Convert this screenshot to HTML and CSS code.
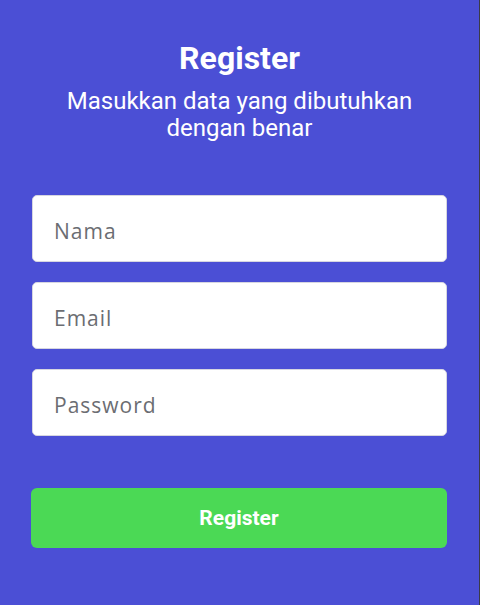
FILE: index.html
```html
<!DOCTYPE html>
<html>
<head>
<meta charset="utf-8">
<link rel="stylesheet" href="styles.css">
</head>
<body>
<div class="screen">
  <header class="head">
    <h1 class="title">Register</h1>
    <p class="subtitle">Masukkan data yang dibutuhkan<br>dengan benar</p>
  </header>
  <form class="form">
    <div class="field"><span class="placeholder">Nama</span></div>
    <div class="field"><span class="placeholder">Email</span></div>
    <div class="field"><span class="placeholder">Password</span></div>
    <div class="btn">Register</div>
  </form>
</div>
</body>
</html>
```
FILE: styles.css
```css
html, body {
  margin: 0;
  padding: 0;
  height: 100%;
}
body {
  background: #3b3b48;
  font-family: Roboto, "Liberation Sans", sans-serif;
}
.screen {
  width: 479px;
  height: 605px;
  background: #4b4fd5;
  box-sizing: border-box;
  padding: 38px 32px 0 32px;
}
.head {
  text-align: center;
  color: #fff;
}
.title {
  margin: 0;
  font-size: 32px;
  font-weight: 700;
  line-height: 40px;
}
.subtitle {
  margin: 10px 0 0 0;
  font-size: 24px;
  line-height: 27px;
  font-weight: 400;
}
.form {
  margin-top: 53px;
  display: flex;
  flex-direction: column;
  gap: 20px;
}
.field {
  height: 67px;
  box-sizing: border-box;
  background: #fff;
  border: 1px solid #d6d6e0;
  border-radius: 5px;
  display: flex;
  align-items: center;
  padding: 4px 0 0 21px;
}
.placeholder {
  font-family: "Open Sans", "Noto Sans", sans-serif;
  font-size: 21px;
  color: #6b6d72;
  letter-spacing: 1px;
}
.btn {
  margin-top: 32px;
  margin-left: -1px;
  height: 60px;
  background: #4bd955;
  border-radius: 6px;
  color: #fff;
  font-weight: 700;
  font-size: 21px;
  display: flex;
  align-items: center;
  justify-content: center;
}
```
